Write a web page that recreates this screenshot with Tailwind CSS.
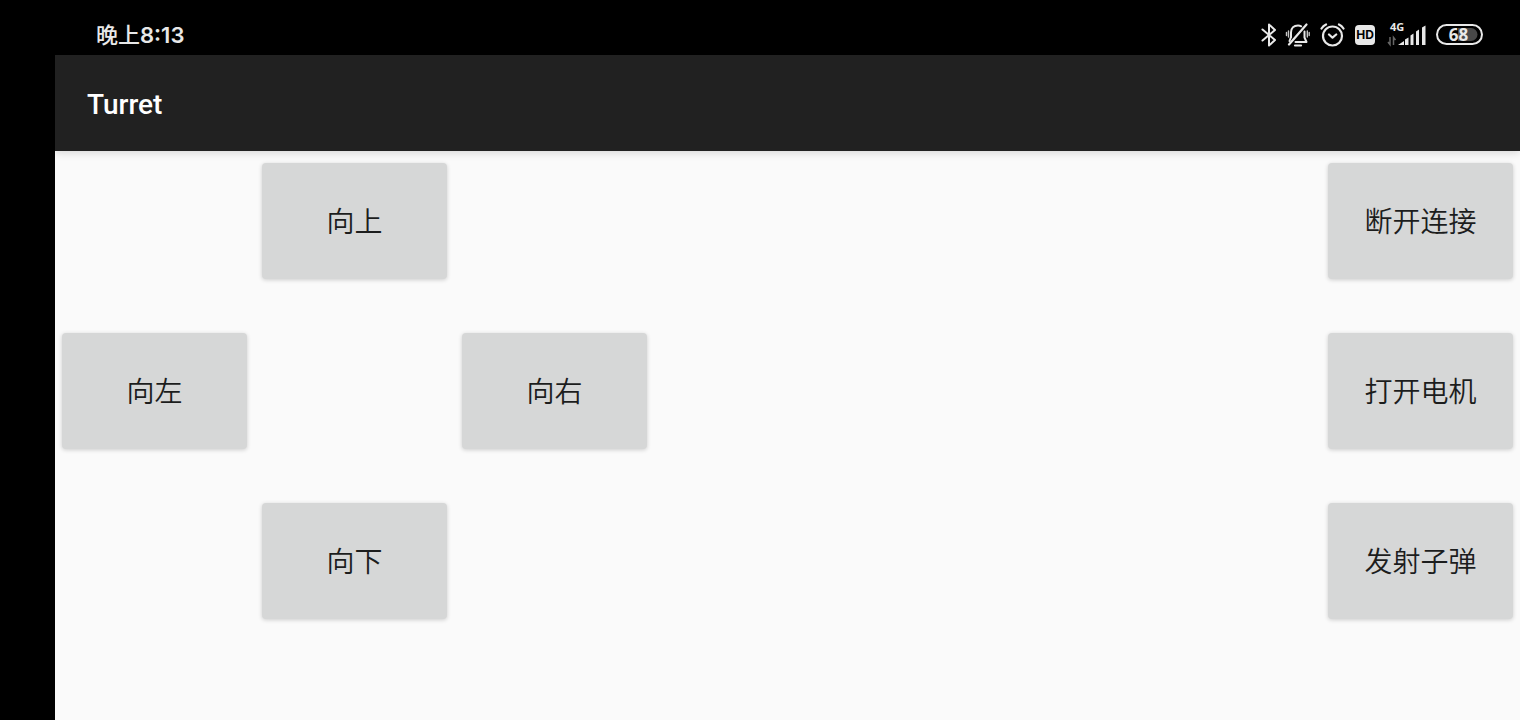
<!DOCTYPE html>
<html lang="zh-CN">
<head>
  <meta charset="UTF-8" />
  <meta name="viewport" content="width=device-width, initial-scale=1.0" />
  <title>Turret</title>
  <script src="https://cdn.jsdelivr.net/npm/@tailwindcss/browser@4"></script>
</head>
<body class="bg-black font-['Roboto','Noto_Sans_CJK_SC',sans-serif]">
  <div class="flex min-h-screen flex-col">

    <!-- Status bar -->
    <div class="flex h-[55px] items-center justify-between pt-[15px] pr-[37px] pl-24 text-[#e8e8e8]">
      <span class="font-['Inter','Noto_Sans_CJK_SC',sans-serif] text-[22px] leading-6 font-semibold"><span class="font-medium">晚上</span>8:13</span>
      <div class="flex items-center">
        <svg class="mr-2 h-6 w-4" viewBox="0 0 16 24" fill="none" stroke="currentColor" stroke-width="2" stroke-linejoin="round" stroke-linecap="round" role="img" aria-label="Bluetooth">
          <path d="M1.5 6.5 14 17 8 22.5V1.5L14 7 1.5 17.5" />
        </svg>
        <svg class="mr-2.5 h-6 w-[25px]" viewBox="0 0 25 24" fill="none" stroke="currentColor" stroke-width="2" stroke-linecap="round" stroke-linejoin="round" role="img" aria-label="Silent">
          <path d="M6 14V9.5C6 5 9 2.5 13 2.5c1.2 0 2.3.3 3.200.8M19.500 8.500V14.500l2 4.500H10.500" />
          <path d="M6 14 4.500 18" />
          <path d="M21.500 1.500 4 21.500" stroke-width="2.200" />
          <path d="M10 22.500h6" stroke-width="2.200" />
          <path d="M3.500 8v6M1.500 9.500v3M22.300 8v6M24.200 9.500v3" stroke-width="1.400" stroke="#c5c5c5" />
        </svg>
        <svg class="mr-2.5 h-6 w-[25px]" viewBox="0 0 25 24" fill="none" stroke="currentColor" stroke-width="2.200" stroke-linecap="round" stroke-linejoin="round" role="img" aria-label="Alarm">
          <circle cx="12.500" cy="13" r="9.500" />
          <path d="M9 11.500l3.500 3.200 3.700-3.200M1.500 5.500C2.500 3.800 4 2.300 6 1.500M23.500 5.500C22.500 3.800 21 2.300 19 1.500" />
        </svg>
        <svg class="mr-3 h-5 w-5" viewBox="0 0 20 20" role="img" aria-label="HD">
          <rect width="20" height="20" rx="4" fill="currentColor" />
          <text x="10" y="14" text-anchor="middle" font-family="Inter" font-weight="700" font-size="12" fill="#000">HD</text>
        </svg>
        <svg class="mr-[9px] h-[26px] w-10 overflow-visible" viewBox="0 0 40 26" fill="currentColor" role="img" aria-label="4G signal">
          <text x="3" y="9" font-family="Open Sans" font-weight="700" font-size="11">4G</text>
          <path d="M11 23 17 19v4zM18 17.500l3.500-2V23H18zM23.500 13.500l3-2V23h-3zM29 9.500l3-2V23h-3zM35 5.500l3.500-2V23H35z" />
          <path d="M3 15v7.500L1 20M6.500 23v-7.500L8.500 18" fill="none" stroke="#666" stroke-width="1.500" />
        </svg>
        <svg class="h-[22px] w-[47px] overflow-visible" viewBox="0 0 47 22" role="img" aria-label="Battery 68">
          <rect x="1" y="1" width="45" height="19" rx="9.500" fill="none" stroke="currentColor" stroke-width="2" />
          <path d="M22 4h13a6.500 6.500 0 0 1 0 13H22z" fill="#484848" />
          <text x="22.500" y="17" text-anchor="middle" font-family="Open Sans" font-weight="700" font-size="17" fill="currentColor">68</text>
        </svg>
      </div>
    </div>

    <!-- App -->
    <div class="ml-[55px] flex grow flex-col bg-[#fafafa]">
      <header class="flex h-24 items-center bg-[#212121] px-8 shadow-[0_2px_8px_rgba(0,0,0,0.14)]">
        <h1 class="pt-1 text-[28px] leading-8 font-medium text-white">Turret</h1>
      </header>

      <main class="flex justify-between px-[7px] py-3 text-[28px] leading-8 text-[#1c1d1d]">
        <!-- Direction pad -->
        <div class="grid grid-cols-[repeat(3,185px)] grid-rows-[repeat(3,116px)] gap-x-[15px] gap-y-[54px] font-['Noto_Sans_CJK_SC',sans-serif] font-[350]">
          <button type="button" class="col-start-2 row-start-1 rounded bg-[#d6d7d7] pb-0.5 shadow-[0_1px_4px_rgba(0,0,0,0.18)]">向上</button>
          <button type="button" class="col-start-1 row-start-2 rounded bg-[#d6d7d7] pb-0.5 shadow-[0_1px_4px_rgba(0,0,0,0.18)]">向左</button>
          <button type="button" class="col-start-3 row-start-2 rounded bg-[#d6d7d7] pb-0.5 shadow-[0_1px_4px_rgba(0,0,0,0.18)]">向右</button>
          <button type="button" class="col-start-2 row-start-3 rounded bg-[#d6d7d7] pb-0.5 shadow-[0_1px_4px_rgba(0,0,0,0.18)]">向下</button>
        </div>

        <!-- Actions -->
        <div class="grid grid-cols-[185px] grid-rows-[repeat(3,116px)] gap-y-[54px] font-['Noto_Sans_CJK_SC',sans-serif] font-[350]">
          <button type="button" class="rounded bg-[#d6d7d7] pb-0.5 shadow-[0_1px_4px_rgba(0,0,0,0.18)]">断开连接</button>
          <button type="button" class="rounded bg-[#d6d7d7] pb-0.5 shadow-[0_1px_4px_rgba(0,0,0,0.18)]">打开电机</button>
          <button type="button" class="rounded bg-[#d6d7d7] pb-0.5 shadow-[0_1px_4px_rgba(0,0,0,0.18)]">发射子弹</button>
        </div>
      </main>
    </div>
  </div>
</body>
</html>
